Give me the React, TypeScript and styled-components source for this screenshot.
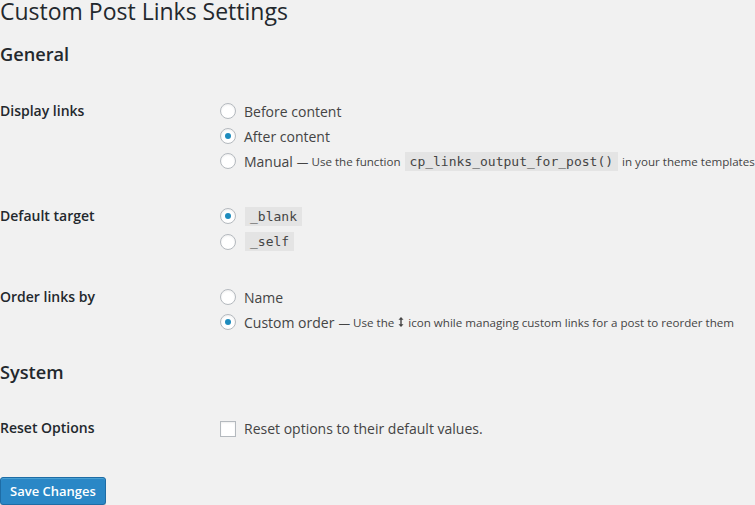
import React from 'react'
import styled, { createGlobalStyle } from 'styled-components'

const GlobalStyle = createGlobalStyle`
    html, body {
        margin: 0;
        padding: 0;
        background: #f1f1f1;
    }
    body {
        font-family: "Open Sans", "Liberation Sans", sans-serif;
        color: #444;
        font-size: 14px;
        overflow: hidden;
    }
`

interface Option {
    label: string
    code?: boolean
    checked?: boolean
    note?: React.ReactNode
}

interface Setting {
    title: string
    options: Array<Option>
}

//Small up/down arrow used in the description
const SortIcon = () => (
    <svg width="6" height="12" viewBox="0 0 6 12" style={{ verticalAlign: '-1px', margin: '0 1px' }}>
        <path d="M3 1 L0.5 3.8 H2.3 V8.2 H0.5 L3 11 L5.5 8.2 H3.7 V3.8 H5.5 Z" fill="#444" />
    </svg>
)

/**
 * Settings of the General section (built lazily so styled parts exist)
 */
const getGeneral = (): Array<Setting> => [
    {
        title: 'Display links',
        options: [
            { label: 'Before content' },
            { label: 'After content', checked: true },
            {
                label: 'Manual',
                note: (
                    <>
                        — Use the function <Code>cp_links_output_for_post()</Code> in your theme templates
                    </>
                ),
            },
        ],
    },
    {
        title: 'Default target',
        options: [
            { label: '_blank', code: true, checked: true },
            { label: '_self', code: true },
        ],
    },
    {
        title: 'Order links by',
        options: [
            { label: 'Name' },
            {
                label: 'Custom order',
                checked: true,
                note: (
                    <>
                        — Use the <SortIcon /> icon while managing custom links for a post to reorder them
                    </>
                ),
            },
        ],
    },
]

const App: React.FC = () => {
    const general = getGeneral()

    return (
        <Wrap>
            <GlobalStyle />
            <Title>Custom Post Links Settings</Title>

            <SectionTitle>General</SectionTitle>
            <Table>
                {general.map((setting) => (
                    <Row key={setting.title}>
                        <Label>{setting.title}</Label>
                        <Options>
                            {setting.options.map((option) => (
                                <OptionLine key={option.label} $code={option.code}>
                                    <Radio $checked={option.checked} />
                                    {option.code ? <Code>{option.label}</Code> : <span>{option.label}</span>}
                                    {option.note && <Note>{option.note}</Note>}
                                </OptionLine>
                            ))}
                        </Options>
                    </Row>
                ))}
            </Table>

            <SectionTitle $system>System</SectionTitle>
            <Table>
                <Row>
                    <Label>Reset Options</Label>
                    <Options>
                        <OptionLine>
                            <Checkbox />
                            <span>Reset options to their default values.</span>
                        </OptionLine>
                    </Options>
                </Row>
            </Table>

            <Submit>
                <PrimaryButton>Save Changes</PrimaryButton>
            </Submit>
        </Wrap>
    )
}

export default App

const Wrap = styled.div`
    padding: 0;
    width: 755px;
`

const Title = styled.h1`
    margin: 0;
    font-size: 23px;
    line-height: 23px;
    font-weight: 400;
    color: #23282d;
`

const SectionTitle = styled.h2<{ $system?: boolean }>`
    margin: ${(p) => (p.$system ? '26px' : '20px')} 0 0;
    font-size: 18.2px;
    line-height: 1.3;
    font-weight: 600;
    color: #23282d;
`

const Table = styled.div`
    display: flex;
    flex-direction: column;
    gap: 30px;
    margin-top: 32px;
`

const Row = styled.div`
    display: grid;
    grid-template-columns: 220px 1fr;
`

const Label = styled.div`
    font-weight: 600;
    font-size: 14px;
    line-height: 1.3;
    color: #23282d;
    padding-top: 3px;
`

const Options = styled.div`
    display: flex;
    flex-direction: column;
`

const OptionLine = styled.div<{ $code?: boolean }>`
    display: flex;
    align-items: center;
    height: ${(p) => (p.$code ? '25.5px' : '25px')};
    white-space: nowrap;
    font-size: 14px;
    color: #444;
`

const Radio = styled.span<{ $checked?: boolean }>`
    position: relative;
    box-sizing: border-box;
    width: 16px;
    height: 16px;
    margin-right: 8px;
    flex: none;
    border: 1px solid #b4b9be;
    border-radius: 50%;
    background: #fff;
    box-shadow: inset 0 1px 2px rgba(0, 0, 0, 0.07);

    &::before {
        content: '';
        display: ${(p) => (p.$checked ? 'block' : 'none')};
        position: absolute;
        left: 4px;
        top: 4px;
        width: 6px;
        height: 6px;
        border-radius: 50%;
        background: #1e8cbe;
    }
`

const Checkbox = styled.span`
    box-sizing: border-box;
    width: 16px;
    height: 16px;
    margin-right: 8px;
    flex: none;
    border: 1px solid #b4b9be;
    background: #fff;
    box-shadow: inset 0 1px 2px rgba(0, 0, 0, 0.07);
`

const Code = styled.code`
    display: inline-block;
    padding: 0 5px;
    margin: 0 1px;
    height: 19px;
    line-height: 19px;
    background: #e4e4e4;
    font-family: "DejaVu Sans Mono", "Liberation Mono", monospace;
    font-size: 13px;
    color: #444;
`

const Note = styled.span`
    margin-left: 4px;
    font-size: 11.6px;
    color: #444;

    ${Code} {
        margin: 0 1px;
    }
`

const Submit = styled.div`
    padding-top: 36px;
`

const PrimaryButton = styled.button`
    height: 28px;
    padding: 0 9px 1px;
    border: 1px solid #1e6ca5;
    border-radius: 3px;
    background: #2a87c6;
    box-shadow: inset 0 1px 0 rgba(120, 200, 230, 0.4), 0 1px 0 rgba(0, 0, 0, 0.15);
    color: #fff;
    font-family: "Open Sans", "Liberation Sans", sans-serif;
    font-size: 13px;
    font-weight: 600;
    line-height: 26px;
`
